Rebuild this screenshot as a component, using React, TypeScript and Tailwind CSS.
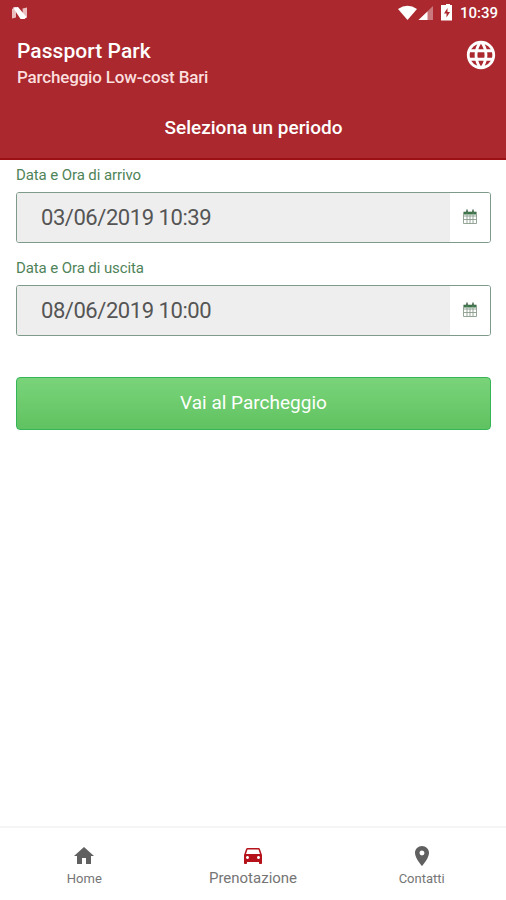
import { MdDirectionsCar, MdHome, MdLanguage, MdLocationOn } from "react-icons/md";
import type { IconType } from "react-icons";
import { clsx } from "clsx";

function StatusBar() {
  return (
    <div className="flex h-[26px] items-center justify-between pl-[11px] pr-2">
      <svg className="h-[14px] w-[17px]" viewBox="0 0 17 14">
        <path d="M1 3l4-2v10.500l-4 1z" fill="#e9bfc0" />
        <path d="M11.500 2.500l4.500-1v10l-4 1.500z" fill="#e9bfc0" />
        <path d="M2 1.500L7 1 15.500 11l-2 2h-4z" fill="#fff" />
      </svg>
      <div className="flex items-center">
        <svg className="h-[19px] w-[56px]" viewBox="0 0 56 19">
          <path d="M0 5Q9.500-1.500 19 5L9.500 16z" fill="#fff" />
          <path d="M35 2v14H20.500z" fill="#c9797d" />
          <path d="M29.500 7.500V16h-9z" fill="#fff" />
          <path
            d="M45 1h3V0h4v1h2v15.500h-11V1zM49.500 4l-3.500 5.500h2.500v4l3.500-5.500h-2.500z"
            fill="#fff"
            fillRule="evenodd"
          />
        </svg>
        <span className="ml-[6px] text-[15px] font-medium leading-none">10:39</span>
      </div>
    </div>
  );
}

function Header() {
  return (
    <header className="h-[160px] border-b-2 border-[#9c1015] bg-[#aa282e] text-white">
      <StatusBar />
      <div className="flex h-[74px] justify-between pl-[17px] pr-2">
        <div>
          <h1 className="mt-[11px] text-[21px] font-medium leading-[28px] tracking-[0.05px]">
            Passport Park
          </h1>
          <p className="text-[17px] font-medium leading-[24px] tracking-[-0.17px] text-[#fbdedd]">
            Parcheggio Low-cost Bari
          </p>
        </div>
        <MdLanguage className="mt-[12px] size-[34px]" />
      </div>
      <h2 className="mt-[14px] pl-px text-center text-[19px] font-medium leading-[28px]">
        Seleziona un periodo
      </h2>
    </header>
  );
}

function CalendarIcon() {
  return (
    <svg className="h-[15px] w-[14px]" viewBox="0 0 14 15" fill="none">
      <path
        d="M.5 3h13v11.500H.5zM.5 7h13M.5 10.500h13M4 6v8.500M7 6v8.500M10 6v8.500"
        stroke="#8a9c8d"
        strokeWidth="0.9"
      />
      <path d="M1 3h12v2.500H1z" fill="#397546" />
      <path d="M4 .5v4M10 .5v4" stroke="#7d9181" strokeWidth="2" />
      <path d="M4 2v2.500M10 2v2.500" stroke="#1f5a2d" strokeWidth="1" />
    </svg>
  );
}

type DateFieldProps = {
  label: string;
  value: string;
};

function DateField({ label, value }: DateFieldProps) {
  return (
    <div className="h-[93px]">
      <p className="h-[32px] pt-[5px] text-[15px] leading-[20px] tracking-[-0.1px] text-[#4f8359]">
        {label}
      </p>
      <div className="flex h-[51px] overflow-hidden rounded-[3px] border border-[#7f9a8b]">
        <div className="flex flex-1 items-center bg-[#eee] pl-[24px] text-[22px] tracking-[-0.45px] text-[#555]">
          {value}
        </div>
        <div className="flex w-[40px] items-center justify-center bg-white pb-[2px]">
          <CalendarIcon />
        </div>
      </div>
    </div>
  );
}

type TabProps = {
  icon: IconType;
  label: string;
  active?: boolean;
};

function Tab({ icon: Icon, label, active }: TabProps) {
  return (
    <div className={clsx("flex flex-1 flex-col items-center", active ? "pt-[15px]" : "pt-[16px]")}>
      <Icon className={clsx("size-6", active ? "text-[#b5121b]" : "text-[#606060]")} />
      <span
        className={clsx(
          "leading-[20px] text-[#757575]",
          active ? "mt-px text-[15px]" : "mt-px text-[13px]",
        )}
      >
        {label}
      </span>
    </div>
  );
}

export default function App() {
  return (
    <div className="flex h-[900px] w-[506px] flex-col bg-white font-['Roboto',sans-serif]">
      <Header />
      <main className="flex-1 pl-4 pr-[15px]">
        <DateField label="Data e Ora di arrivo" value="03/06/2019 10:39" />
        <DateField label="Data e Ora di uscita" value="08/06/2019 10:00" />
        <button className="mt-[31px] h-[53px] w-full rounded-[4px] border border-[#35b558] bg-linear-to-b from-[#7ad47a] to-[#60c260] pb-px text-[19px] text-white">
          Vai al Parcheggio
        </button>
      </main>
      <nav className="flex h-[74px] border-t-2 border-[#f5f5f5]">
        <Tab icon={MdHome} label="Home" />
        <Tab icon={MdDirectionsCar} label="Prenotazione" active />
        <Tab icon={MdLocationOn} label="Contatti" />
      </nav>
    </div>
  );
}
